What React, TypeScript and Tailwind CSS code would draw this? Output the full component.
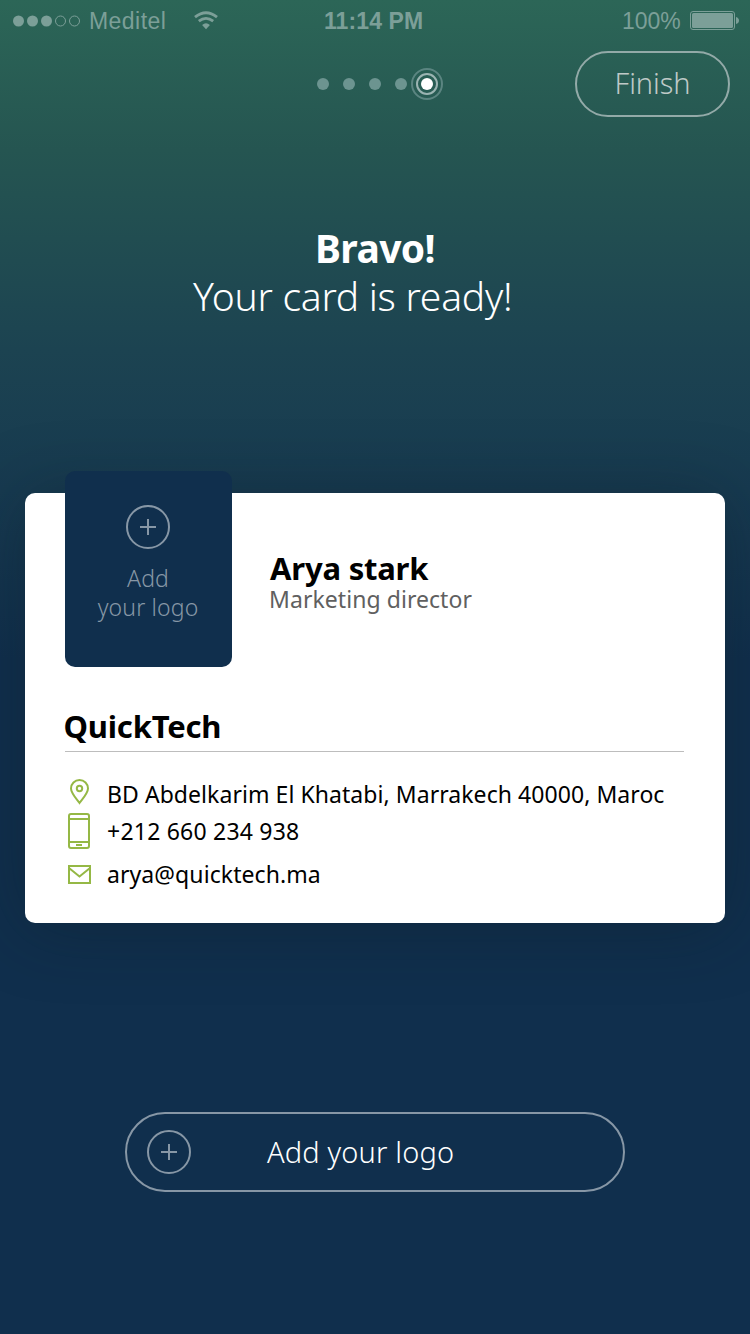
import type { ReactNode } from "react";

function PlusCircle() {
  return (
    <svg width="44" height="44" viewBox="0 0 44 44" fill="none" className="block shrink-0 stroke-[#8797a6]" strokeWidth="2">
      <circle cx="22" cy="22" r="21" />
      <path d="M14 22h16M22 14v16" />
    </svg>
  );
}

function StatusBar() {
  return (
    <header className="flex h-[41px] items-center font-['Liberation_Sans',sans-serif] text-[23px] leading-[41px] text-[#7c9f98]">
      <svg width="70" height="14" viewBox="0 0 70 14" className="ml-3 shrink-0" fill="currentColor">
        <circle cx="6.5" cy="7" r="5.5" />
        <circle cx="20.5" cy="7" r="5.5" />
        <circle cx="34.5" cy="7" r="5.5" />
        <circle cx="48.5" cy="7" r="5" fill="none" stroke="currentColor" />
        <circle cx="62.5" cy="7" r="5" fill="none" stroke="currentColor" />
      </svg>
      <span className="ml-[7px] w-[78px] whitespace-nowrap pt-[2px] tracking-[0.45px]">Meditel</span>
      <svg width="24" height="19" viewBox="0 0 24 19" className="ml-[27px] shrink-0" fill="none" stroke="currentColor" strokeWidth="2.8">
        <path d="M1 6.2Q12-2.8 23 6.2M4.8 10.2Q12 4.5 19.2 10.2" />
        <path d="M8.1 14.1Q12 10.5 15.9 14.1L12 18.3Z" fill="currentColor" stroke="none" />
      </svg>
      <span className="ml-[106px] w-[100px] whitespace-nowrap pt-[1px] font-bold tracking-[0.1px]">11:14 PM</span>
      <span className="ml-[198px] w-[60px] whitespace-nowrap pt-[2px]">100%</span>
      <svg width="50" height="19" viewBox="0 0 50 19" className="ml-2 shrink-0" fill="currentColor">
        <rect x=".5" y=".5" width="44" height="18" rx="2.5" fill="none" stroke="currentColor" />
        <rect x="2" y="2" width="41" height="15" rx="1.5" />
        <path d="M46 6q3 1 3 3.500T46 13Z" />
      </svg>
    </header>
  );
}

function Contact({ icon, children, className }: { icon: ReactNode; children: ReactNode; className: string }) {
  return (
    <li className={`flex h-[37px] items-center ${className}`}>
      <span className="flex w-[42px] shrink-0 pl-[3px]">{icon}</span>
      <span className="whitespace-nowrap">{children}</span>
    </li>
  );
}

function BusinessCard() {
  return (
    <section className="mx-[25px] mt-[171px] h-[430px] shrink-0 rounded-[10px] bg-white px-10 text-black shadow-[0_4px_70px_rgba(14,28,38,0.38)]">
      <div className="flex">
        <button className="-mt-[22px] flex h-[196px] w-[167px] flex-col items-center rounded-[10px] bg-[#102f4d] pt-[34px] pr-px text-[23px] leading-[29px] font-light tracking-[0.15px] text-[#8797a6]">
          <PlusCircle />
          <span className="mt-[15px]">Add</span>
          <span className="whitespace-nowrap">your logo</span>
        </button>
        <div className="ml-[38px] pt-[59px]">
          <h2 className="text-[31px] leading-[32px] font-bold tracking-[-0.2px] whitespace-nowrap">Arya stark</h2>
          <p className="-ml-px text-[23px] leading-[30px] tracking-[0.06px] whitespace-nowrap text-[#606060]">Marketing director</p>
        </div>
      </div>
      <h3 className="mt-[40px] mr-px h-[45px] border-b border-[#bdbdbd] text-[31px] leading-[38px] font-bold tracking-[-0.2px]">
        <span className="-ml-[1.5px]">QuickTech</span>
      </h3>
      <ul className="mt-[24px] text-[23px] leading-[37px]">
        <Contact
          className="tracking-[0.06px]"
          icon={
            <svg width="19" height="26" viewBox="0 0 19 26" fill="none" stroke="#95b845" strokeWidth="2" className="-mt-[6px] ml-[2px]">
              <path d="M9.5 24C5.200 18.400 1 13.900 1 9.500a8.500 8.500 0 0 1 17 0C18 13.900 13.800 18.400 9.500 24Z" />
              <circle cx="9.500" cy="9.500" r="2.700" />
            </svg>
          }
        >
          BD Abdelkarim El Khatabi, Marrakech 40000, Maroc
        </Contact>
        <Contact
          className="tracking-[0.22px]"
          icon={
            <svg width="22" height="36" viewBox="0 0 22 36" fill="none" stroke="#95b845" strokeWidth="2" className="-mt-[2px]">
              <rect x="1" y="1" width="20" height="34" rx="2" />
              <path d="M1 6h20M1 29h20M8 32h6" />
            </svg>
          }
        >
          +212 660 234 938
        </Contact>
        <Contact
          className="mt-[6px] tracking-[0.08px]"
          icon={
            <svg width="23" height="19" viewBox="0 0 23 19" fill="none" stroke="#95b845" strokeWidth="2">
              <path d="M1 1h21v17H1ZM1 3l10.5 8.500L22 3" />
            </svg>
          }
        >
          arya@quicktech.ma
        </Contact>
      </ul>
    </section>
  );
}

export default function App() {
  return (
    <main className="flex h-[1334px] w-[750px] flex-col overflow-hidden bg-[linear-gradient(#2c6657_0px,#255551_150px,#1c4351_350px,#173a50_490px,#102f4d_660px)] font-['Noto_Sans',sans-serif] text-white">
      <StatusBar />
      <nav className="mt-[10px] flex h-[66px] items-center">
        <svg width="128" height="34" viewBox="0 0 128 34" className="ml-[316px] shrink-0">
          <g fill="#6c9490">
            <circle cx="7" cy="17" r="6" />
            <circle cx="33" cy="17" r="6" />
            <circle cx="59" cy="17" r="6" />
            <circle cx="85" cy="17" r="6" />
          </g>
          <g fill="none" strokeWidth="2">
            <circle cx="111" cy="17" r="15" stroke="#5b8581" />
            <circle cx="111" cy="17" r="10" stroke="#9bb4b2" />
          </g>
          <circle cx="111" cy="17" r="6" fill="#fff" />
        </svg>
        <button className="ml-[131px] h-[66px] w-[155px] rounded-full border-2 border-[#93aaa8] pb-[2px] text-[29px] leading-[60px] font-light tracking-[-0.1px] text-[#bfc9c7]">
          Finish
        </button>
      </nav>
      <h1 className="mt-[107px] flex flex-col text-[39px] whitespace-nowrap">
        <span className="h-[48px] pl-[315px] leading-[48px] font-bold tracking-[-0.6px]">Bravo!</span>
        <span className="h-[50px] pl-[193px] leading-[48px] font-light tracking-[-0.25px]">Your card is ready!</span>
      </h1>
      <BusinessCard />
      <button className="mx-[125px] mt-[189px] flex h-[80px] shrink-0 items-center rounded-full border-2 border-[#8797a6] pl-5 text-[29px] font-light tracking-[0.15px]">
        <PlusCircle />
        <span className="ml-[76px] whitespace-nowrap">Add your logo</span>
      </button>
    </main>
  );
}
